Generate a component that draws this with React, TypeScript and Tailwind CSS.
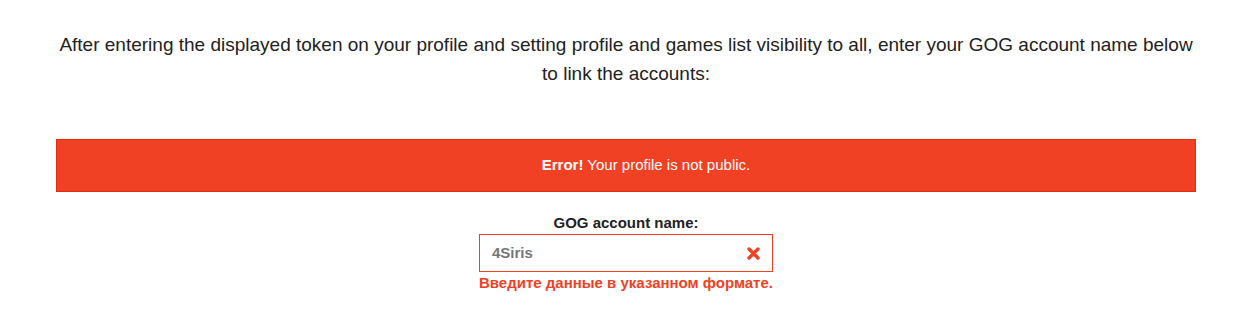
import React from "react";

export default function App() {
  return (
    <div className="w-[1247px] h-[321px] bg-white" style={{ fontFamily: '"Liberation Sans", Arial, sans-serif' }}>
      <div className="ml-[56px] w-[1140px] pt-[30px]">
        <p className="text-center text-[19px] leading-[29px] text-[#222222]">
          After entering the displayed token on your profile and setting profile and games list visibility to all, enter your GOG account name below to link the accounts:
        </p>
        <div className="mt-[51px] h-[53px] bg-[#f04124] border border-[#de2d0f] flex items-center justify-center pl-[40px] text-white text-[15px]">
          <span>
            <b>Error!</b> Your profile is not public.
          </span>
        </div>
        <div className="flex flex-col items-center mt-[21px]">
          <div className="w-[294px]">
            <div className="text-center font-bold text-[15px] leading-[20px] text-[#222222]">GOG account name:</div>
            <div className="mt-[1px] h-[38px] border border-[#f04124] flex items-center justify-between pl-[12px] pr-[12px]">
              <span className="font-bold text-[15px] text-[#777777]">4Siris</span>
              <svg width="13" height="13" viewBox="0 0 13 13">
                <path d="M2 2 L11 11 M11 2 L2 11" stroke="#f04124" strokeWidth="3.4" strokeLinecap="round" />
              </svg>
            </div>
            <div className="mt-[2px] text-center font-bold text-[15px] leading-[18px] text-[#f04124] whitespace-nowrap">
              Введите данные в указанном формате.
            </div>
          </div>
        </div>
      </div>
    </div>
  );
}
